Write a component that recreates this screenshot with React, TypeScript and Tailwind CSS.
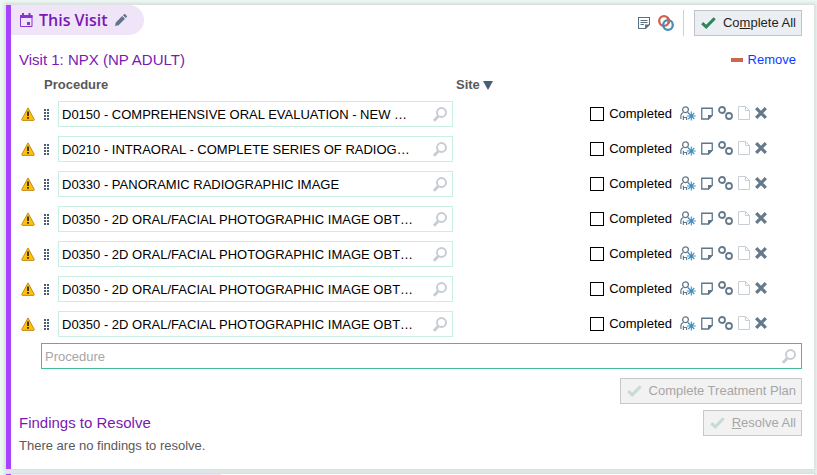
import React from "react";

const procedures = [
  "D0150 - COMPREHENSIVE ORAL EVALUATION - NEW …",
  "D0210 - INTRAORAL - COMPLETE SERIES OF RADIOG…",
  "D0330 - PANORAMIC RADIOGRAPHIC IMAGE",
  "D0350 - 2D ORAL/FACIAL PHOTOGRAPHIC IMAGE OBT…",
  "D0350 - 2D ORAL/FACIAL PHOTOGRAPHIC IMAGE OBT…",
  "D0350 - 2D ORAL/FACIAL PHOTOGRAPHIC IMAGE OBT…",
  "D0350 - 2D ORAL/FACIAL PHOTOGRAPHIC IMAGE OBT…",
];

const CalendarIcon = () => (
  <svg width="13" height="14" viewBox="0 0 13 14" fill="none" className="shrink-0">
    <path d="M.5 2.5h11.5v11H.5z" stroke="#8636d0" />
    <path d="M0 2h12.500v3H0zM2 0h2v2H2zM8.500 0h2v2h-2zM7 9h3v3H7z" fill="#8636d0" />
  </svg>
);

const PencilIcon = () => (
  <svg width="12" height="12" viewBox="0 0 12 12" fill="#64748b">
    <path d="M0 12l.8-3.6L7.2 2l2.8 2.8-6.4 6.4zM8 1.2l.9-.9c.4-.4.9-.4 1.300 0l1.500 1.500c.4.4.4.9 0 1.300l-.9.9z" />
  </svg>
);

const NoteIcon = () => (
  <svg width="12" height="12" viewBox="0 0 12 12">
    <path d="M.5.500h11v7L7.500 11.500H.500z" fill="none" stroke="#5b7083" strokeWidth="1.100" />
    <path d="M7 12V7.500h5zM2.500 3h7v1h-7zM2.500 5h7v1h-7zM2.500 7h3.500v1H2.500z" fill="#5b7083" />
  </svg>
);

const RingsIcon = () => (
  <svg width="16" height="16" viewBox="0 0 16 16" fill="none" strokeWidth="2.300">
    <circle cx="6" cy="6" r="4.800" stroke="#d0604a" />
    <circle cx="10" cy="10" r="4.800" stroke="#438fb8" />
    <path d="M9.400 2.600A4.800 4.800 0 0 1 10.200 8.400" stroke="#d0604a" />
  </svg>
);

const CheckIcon = ({ faded = false }: { faded?: boolean }) => (
  <svg width="15" height="12" viewBox="0 0 15 12" fill="none" className="shrink-0">
    <path d="M1.200 6.200l4 3.700L13.700 1.200" stroke={faded ? "#c6dcd2" : "#2f855a"} strokeWidth="3" />
  </svg>
);

const SearchIcon = () => (
  <svg width="14" height="15" viewBox="0 0 14 15" fill="none" stroke="#c5ccd4" className="shrink-0">
    <circle cx="8.500" cy="5.500" r="4.500" strokeWidth="1.900" />
    <path d="M5.200 9.200L.900 13.800" strokeWidth="2.800" />
  </svg>
);

const WarningIcon = () => (
  <svg width="14" height="14" viewBox="0 0 14 14" role="img" aria-label="Warning" className="shrink-0">
    <path d="M7 .900L13.300 12.500Q13.300 13.400 12.600 13.400H1.400Q.700 13.400.700 12.500z" fill="#ffc107" stroke="#c58a1c" strokeLinejoin="round" />
    <path d="M6.200 4.500h1.600v4.500H6.200zM6.200 10h1.600v1.800H6.200z" fill="#171717" />
  </svg>
);

const GripIcon = () => (
  <svg width="5" height="11" viewBox="0 0 5 11" stroke="#475f75" strokeWidth="2" shapeRendering="crispEdges">
    <path d="M1 0v11M4 0v11" strokeDasharray="2 1" />
  </svg>
);

const PersonIcon = () => (
  <svg width="16" height="15" viewBox="0 0 16 15" fill="none">
    <circle cx="5.500" cy="3.700" r="2.900" stroke="#64798b" strokeWidth="1.300" />
    <path d="M.9 13V9.500C.9 8 2 7.200 3.300 6.500M7.700 6.500l1.300.900M3.400 14v-4.200M3.400 11.500h3.200V14" stroke="#64798b" strokeWidth="1.200" />
    <path d="M11.300 5.500v9M6.800 10h9M8.300 7l6 6M14.300 7l-6 6" stroke="#3f8fc0" strokeWidth="1.100" />
  </svg>
);

const StickyIcon = () => (
  <svg width="12" height="13" viewBox="0 0 12 13">
    <path d="M.750 1.250h10.500v7L7.500 12H.750z" fill="none" stroke="#5f7588" strokeWidth="1.300" />
    <path d="M7 13V8h5z" fill="#5f7588" />
  </svg>
);

const LinkIcon = () => (
  <svg width="15" height="14" viewBox="0 0 15 14" fill="none" stroke="#64798b" strokeWidth="1.800">
    <circle cx="4" cy="4" r="3" />
    <circle cx="11" cy="10" r="3" />
  </svg>
);

const PageIcon = () => (
  <svg width="12" height="14" viewBox="0 0 12 14" fill="none" stroke="#c8ced5">
    <path d="M.500.500h7l4 4v9H.500zM7.500.500v4h4" />
  </svg>
);

const CloseIcon = () => (
  <svg width="12" height="12" viewBox="0 0 12 12" stroke="#64798b" strokeWidth="3.300">
    <path d="M1.200 1.200l9.600 9.600M10.800 1.200l-9.600 9.600" />
  </svg>
);

function ProcedureRow({ name, index }: { name: string; index: number }) {
  return (
    <li className="flex h-[26px] items-center pl-2.5">
      <WarningIcon />
      <button type="button" aria-label="Reorder" className="ml-[9px] w-3.5 shrink-0">
        <GripIcon />
      </button>
      <div className="flex h-[26px] w-[395px] items-center border border-[#c9efe3] pr-[5px]">
        <input
          aria-label={`Procedure ${index + 1}`}
          defaultValue={name}
          className="h-full min-w-0 flex-1 bg-transparent pl-[3px] text-black outline-none"
        />
        <button type="button" aria-label="Search">
          <SearchIcon />
        </button>
      </div>
      <label className="ml-auto flex items-center gap-[5px] text-black">
        <input type="checkbox" className="size-3.5 appearance-none border border-black bg-white checked:bg-black" />
        Completed
      </label>
      <div className="mr-[47px] ml-2 flex items-center gap-[5px] pb-0.5">
        <button type="button" aria-label="Provider"><PersonIcon /></button>
        <button type="button" aria-label="Note"><StickyIcon /></button>
        <button type="button" aria-label="Link"><LinkIcon /></button>
        <button type="button" aria-label="Document"><PageIcon /></button>
        <button type="button" aria-label="Delete"><CloseIcon /></button>
      </div>
    </li>
  );
}

export default function App() {
  return (
    <div className="min-h-screen overflow-hidden bg-[#edf7f4] pt-[5px] pr-[3px] pl-1.5 font-['Liberation_Sans',Arial,sans-serif] text-[13px] leading-4 text-[#595959]">
      <section className="border-l-[5px] border-[#a742ff] bg-white pb-[15px] shadow-[0_0_3px_2px_#d5dedb]">
        <header className="flex items-start justify-between pr-3">
          <div className="flex h-[30px] items-center rounded-r-full bg-[#f0e4f8] pr-[17px] pl-[9px]">
            <CalendarIcon />
            <h1 className="mr-[7px] ml-1.5 font-['Open_Sans',sans-serif] text-[16px] font-semibold text-[#7a18b4]">This Visit</h1>
            <button type="button" aria-label="Edit visit"><PencilIcon /></button>
          </div>
          <div className="mt-[5px] flex h-[26px] items-center">
            <button type="button" aria-label="Notes" className="mr-2"><NoteIcon /></button>
            <button type="button" aria-label="Linked" className="mr-[9px]"><RingsIcon /></button>
            <span className="mr-2.5 h-[26px] w-px bg-[#cfcfcf]" />
            <button type="button" className="flex h-[26px] items-center gap-[7px] border border-[#bfc4c9] bg-[#ebeff4] pr-[5px] pl-1.5 text-[#1f1f1f]">
              <CheckIcon />
              <span>Co<u>m</u>plete All</span>
            </button>
          </div>
        </header>

        <div className="mt-[15px] flex items-center justify-between pr-[18px] pl-2">
          <h2 className="text-[15px] leading-[18px] text-[#7a18b4]">Visit 1: NPX (NP ADULT)</h2>
          <button type="button" className="flex items-center gap-[5px] text-[#0b3bff]">
            <span className="h-1 w-3 bg-[#cd6650]" />
            Remove
          </button>
        </div>

        <div className="mt-2 flex pl-[33px] font-bold">
          <span className="w-[412px]">Procedure</span>
          <button type="button" className="flex items-center gap-[3px] font-bold">
            Site
            <svg width="10" height="9" viewBox="0 0 10 9" fill="#475f75"><path d="M0 0h10L5 9z" /></svg>
          </button>
        </div>

        <ul className="mt-2 flex flex-col gap-[9px]">
          {procedures.map((name, i) => (
            <ProcedureRow key={i} name={name} index={i} />
          ))}
        </ul>

        <div className="mt-1.5 mr-3 ml-[30px] flex h-[26px] items-center border border-[#42bd9c] pr-[5px]">
          <input
            aria-label="Add procedure"
            placeholder="Procedure"
            className="h-full min-w-0 flex-1 bg-transparent pl-[3px] outline-none placeholder:text-[#a6a6a6]"
          />
          <button type="button" aria-label="Search"><SearchIcon /></button>
        </div>

        <div className="mt-[9px] flex justify-end pr-3">
          <button type="button" disabled className="flex h-[26px] items-center gap-[7px] border border-[#c8c8c8] bg-[#f2f2f2] pr-[5px] pl-1.5 text-[#a6a6a6]">
            <CheckIcon faded />
            Complete Treatment Plan
          </button>
        </div>

        <div className="mt-1.5 flex items-center justify-between pr-3 pl-2">
          <h2 className="text-[15px] leading-[18px] text-[#7a18b4]">Findings to Resolve</h2>
          <button type="button" disabled className="flex h-[26px] items-center gap-[7px] border border-[#c8c8c8] bg-[#f2f2f2] pr-[5px] pl-1.5 text-[#a6a6a6]">
            <CheckIcon faded />
            <span><u>R</u>esolve All</span>
          </button>
        </div>
        <p className="mt-0.5 pl-2">There are no findings to resolve.</p>
      </section>

      <section className="mt-[5px] border-l-[5px] border-[#a742ff] bg-white shadow-[0_0_3px_2px_#d5dedb]">
        <div className="h-px w-[210px] bg-[#f0e4f8]" />
      </section>
    </div>
  );
}
